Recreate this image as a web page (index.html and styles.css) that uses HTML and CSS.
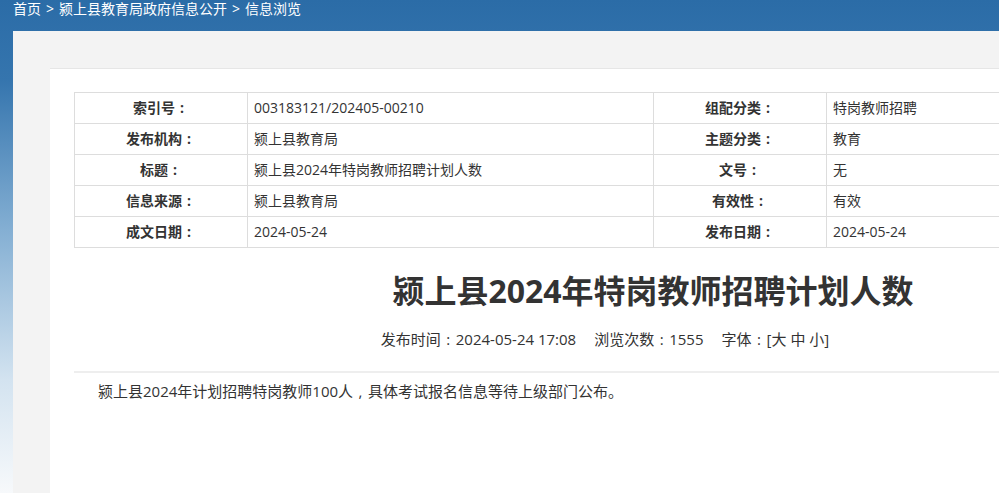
FILE: index.html
```html
<!DOCTYPE html>
<html lang="zh-CN">
<head>
  <meta charset="UTF-8">
  <title>信息浏览</title>
  <link rel="stylesheet" href="styles.css">
</head>
<body>

  <div class="crumb">
    <a href="#">首页</a><span class="sep">&gt;</span><a href="#">颍上县教育局政府信息公开</a><span class="sep">&gt;</span><span>信息浏览</span>
  </div>

  <div class="panel">
    <div class="card">

      <!-- 信息索引表 -->
      <table class="info">
        <tr>
          <th>索引号<i class="p">:</i></th>
          <td class="val">003183121/202405-00210</td>
          <th>组配分类<i class="p">:</i></th>
          <td class="val">特岗教师招聘</td>
        </tr>
        <tr>
          <th>发布机构<i class="p">:</i></th>
          <td class="val">颍上县教育局</td>
          <th>主题分类<i class="p">:</i></th>
          <td class="val">教育</td>
        </tr>
        <tr>
          <th>标题<i class="p">:</i></th>
          <td class="val">颍上县2024年特岗教师招聘计划人数</td>
          <th>文号<i class="p">:</i></th>
          <td class="val">无</td>
        </tr>
        <tr>
          <th>信息来源<i class="p">:</i></th>
          <td class="val">颍上县教育局</td>
          <th>有效性<i class="p">:</i></th>
          <td class="val">有效</td>
        </tr>
        <tr>
          <th>成文日期<i class="p">:</i></th>
          <td class="val">2024-05-24</td>
          <th>发布日期<i class="p">:</i></th>
          <td class="val">2024-05-24</td>
        </tr>
      </table>

      <h1 class="title">颍上县2024年特岗教师招聘计划人数</h1>
      <div class="meta">
        发布时间<i class="p">:</i>2024-05-24 17:08<span class="gap"></span>浏览次数<i class="p">:</i>1555<span class="gap"></span>字体<i class="p">:</i>[<a href="#">大</a> <a href="#">中</a> <a href="#">小</a>]
      </div>

      <div class="content">
        <p>颍上县2024年计划招聘特岗教师100人<i class="p">,</i>具体考试报名信息等待上级部门公布。</p>
      </div>

    </div>
  </div>

</body>
</html>
```

FILE: styles.css
```css
html, body {
  overflow: hidden;
}

body {
  margin: 0;
  height: 493px;
  font-family: "Open Sans", "Noto Sans CJK SC", sans-serif;
  font-size: 14px;
  color: #333;
  background: linear-gradient(to bottom, #2b6ca7 0px, #3575ae 80px, #84afd3 230px, #d3e3f0 380px, #f7f9fb 493px);
}

a {
  color: inherit;
  text-decoration: none;
}

/* centred full-width punctuation */
.p {
  display: inline-block;
  width: 1em;
  font-style: normal;
  text-align: center;
}

.crumb {
  height: 31px;
  line-height: 18px;
  padding-left: 13px;
  color: #fff;
  white-space: nowrap;
}

.crumb .sep {
  margin: 0 5px;
}

.panel {
  margin-left: 13px;
  width: 1300px;
  height: 462px;
  padding: 37px 0 0 37px;
  box-sizing: border-box;
  background-color: #f3f3f3;
}

.card {
  width: 1206px;
  height: 430px;
  padding: 23px 24px 0;
  box-sizing: border-box;
  background-color: #fff;
  border-top: 1px solid #e6e6e6;
}

.info {
  width: 1158px;
  border-collapse: collapse;
  table-layout: fixed;
}

.info th,
.info td {
  height: 30px;
  padding: 0;
  border: 1px solid #ddd;
  font-size: 14px;
  line-height: 20px;
}

.info th {
  width: 172px;
  font-weight: bold;
  text-align: center;
}

.info td.val {
  width: 399px;
  padding-left: 6px;
  text-align: left;
}

.title {
  margin: 21px 0 0;
  font-size: 32px;
  line-height: 44px;
  font-weight: bold;
  text-align: center;
  color: #333;
}

.meta {
  margin-top: 14px;
  font-size: 15px;
  line-height: 24px;
  padding-right: 96px;
  text-align: center;
  color: #333;
}

.meta .gap {
  display: inline-block;
  width: 18px;
}

.content {
  margin-top: 20px;
  border-top: 2px solid #eee;
  padding: 6px 24px 0;
}

.content p {
  margin: 0;
  font-size: 15px;
  line-height: 24px;
}
```
